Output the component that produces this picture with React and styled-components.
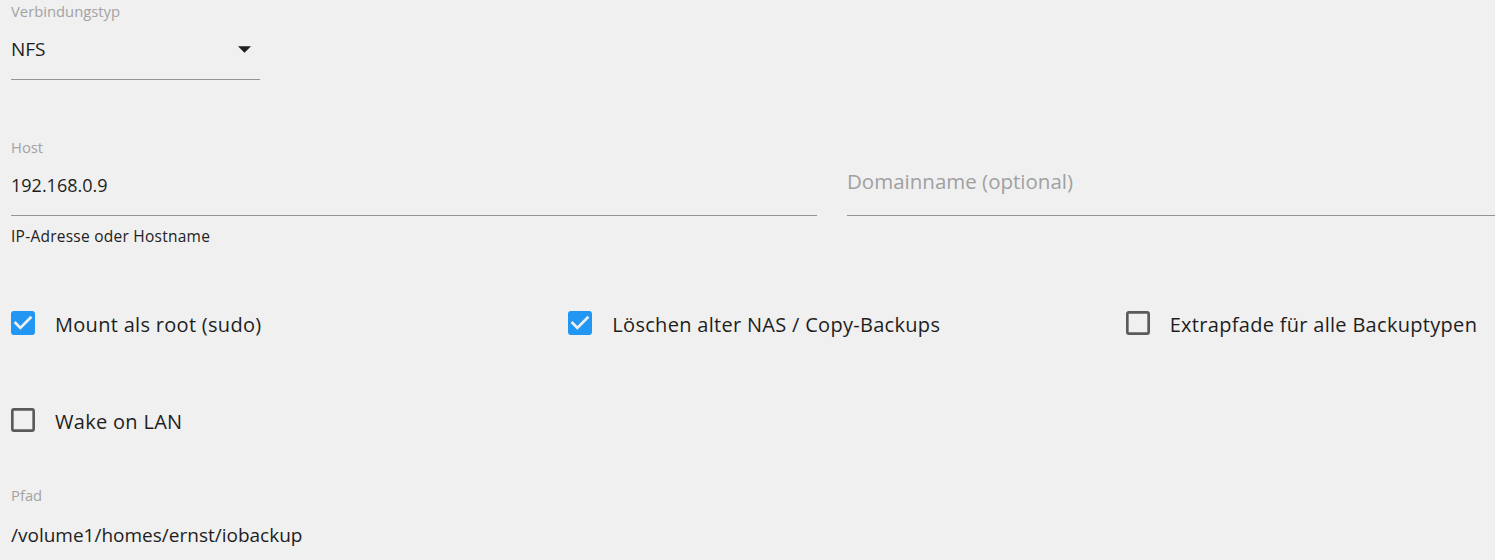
import React from "react";
import styled, { createGlobalStyle } from "styled-components";

const GlobalStyle = createGlobalStyle`
    html, body {
        margin: 0;
        padding: 0;
        background: #f0f0f0;
        overflow: hidden;
    }
    body {
        font-family: "Open Sans", "Noto Sans", sans-serif;
        color: #222;
    }
`

const Page = styled.div`
    width: 1672px;
    padding-top: 1px;
`

const Cell = styled.div`
    padding: 0 ${(p) => p.$right || 0}px 0 11px;
    width: ${(p) => (p.$width ? p.$width + "px" : "auto")};
`

const Grid = styled.div`
    display: grid;
    grid-template-columns: repeat(${(p) => p.$cols}, 1fr);
    margin-top: ${(p) => p.$top || 0}px;
`

const Label = styled.div`
    margin-top: ${(p) => p.$top || 0}px;
    font-size: 14.8px;
    line-height: 20px;
    height: 20px;
    color: #a3a3a3;
`

const InputRow = styled.div`
    display: flex;
    align-items: center;
    justify-content: space-between;
    padding: ${(p) => (p.$raise ? "12px 0 22px" : "16px 0 18px")};
    line-height: 24px;
    height: 24px;
    border-bottom: 1px solid #949494;
    font-size: ${(p) => p.$size || 18}px;
    color: ${(p) => (p.$placeholder ? "#a0a0a0" : "#1e1e1e")};
`

const Helper = styled.div`
    margin-top: 10px;
    font-size: 15.5px;
    letter-spacing: 0.25px;
    line-height: 20px;
    color: #222;
`

const Arrow = styled.svg`
    width: 13px;
    height: 7px;
    margin-right: 9px;
    fill: #1e1e1e;
`

const CheckRow = styled.label`
    display: flex;
    align-items: center;
    height: 48px;
    gap: 20px;
    font-size: 20px;
    letter-spacing: 0.3px;
    color: #1e1e1e;
`

const Text = styled.span`
    padding-top: 3px;
`

const Box = styled.svg`
    width: 24px;
    height: 24px;
    flex: none;
    fill: ${(p) => (p.$checked ? "#2196f3" : "#5a5a5a")};
`

const Check = ({ checked, children }) => (
    <CheckRow>
        <Box $checked={checked} viewBox="3 3 18 18">
            {checked ? (
                <path d="M19 3H5c-1.11 0-2 .9-2 2v14c0 1.1.89 2 2 2h14c1.11 0 2-.9 2-2V5c0-1.1-.89-2-2-2zm-9 14l-5-5 1.41-1.41L10 14.17l7.59-7.59L19 8l-9 9z" />
            ) : (
                <path d="M19 5v14H5V5h14m0-2H5c-1.1 0-2 .9-2 2v14c0 1.1.9 2 2 2h14c1.1 0 2-.9 2-2V5c0-1.1-.9-2-2-2z" />
            )}
        </Box>
        <Text>{children}</Text>
    </CheckRow>
);

export default function App() {
    return (
        <Page>
            <GlobalStyle />
            <Cell $width={249}>
                <Label>Verbindungstyp</Label>
                <InputRow $size={19}>
                    NFS
                    <Arrow viewBox="7 10 10 5">
                        <path d="M7 10l5 5 5-5z" />
                    </Arrow>
                </InputRow>
            </Cell>

            <Grid $cols={2} $top={57}>
                <Cell $right={19}>
                    <Label>Host</Label>
                    <InputRow>192.168.0.9</InputRow>
                    <Helper>IP-Adresse oder Hostname</Helper>
                </Cell>
                <Cell $right={19}>
                    <Label />
                    <InputRow $placeholder $raise $size={20.5}>
                        Domainname (optional)
                    </InputRow>
                </Cell>
            </Grid>

            <Grid $cols={3} $top={53}>
                <Cell>
                    <Check checked>Mount als root (sudo)</Check>
                </Cell>
                <Cell>
                    <Check checked>Löschen alter NAS / Copy-Backups</Check>
                </Cell>
                <Cell>
                    <Check>Extrapfade für alle Backuptypen</Check>
                </Cell>
            </Grid>

            <Grid $cols={3} $top={49}>
                <Cell>
                    <Check>Wake on LAN</Check>
                </Cell>
            </Grid>

            <Cell>
                <Label $top={41}>Pfad</Label>
                <InputRow $size={19} style={{ paddingTop: 18 }}>
                    /volume1/homes/ernst/iobackup
                </InputRow>
            </Cell>
        </Page>
    );
}
